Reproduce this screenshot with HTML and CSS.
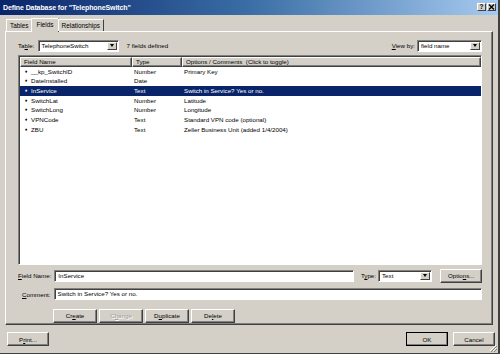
FILE: index.html
```html
<!DOCTYPE html>
<html>
<head>
<meta charset="utf-8">
<link rel="stylesheet" href="styles.css">
</head>
<body>
<div class="window">
  <div class="titlebar">
    <span class="title">Define Database for "TelephoneSwitch"</span>
    <div class="tbtns">
      <span class="tbtn">?</span>
      <span class="tbtn x">
        <svg width="7" height="6" viewBox="0 0 7 6"><path d="M1 0.5 L6 5.5 M6 0.5 L1 5.5" stroke="#000" stroke-width="1.4"/></svg>
      </span>
    </div>
  </div>
  <div class="tabs">
    <span class="tab">Tables</span>
    <span class="tab active">Fields</span>
    <span class="tab">Relationships</span>
  </div>
  <div class="panel">
    <div class="toolbar">
      <span class="lbl">Ta<u>b</u>le:</span>
      <div class="combo table-combo"><span class="val">TelephoneSwitch</span><span class="drop"><i></i></span></div>
      <span class="count">7 fields defined</span>
      <span class="spacer"></span>
      <span class="lbl"><u>V</u>iew by:</span>
      <div class="combo view-combo"><span class="val">field name</span><span class="drop"><i></i></span></div>
    </div>
    <div class="listbox">
      <div class="row head">
        <span class="hc">Field Name</span>
        <span class="hc">Type</span>
        <span class="hc last">Options / Comments &nbsp;(Click to toggle)</span>
      </div>
      <div class="row"><span class="c name"><b class="dia">♦</b>__kp_SwitchID</span><span class="c">Number</span><span class="c">Primary Key</span></div>
      <div class="row"><span class="c name"><b class="dia">♦</b>DateInstalled</span><span class="c">Date</span><span class="c"></span></div>
      <div class="row sel"><span class="c name"><b class="dia">♦</b>InService</span><span class="c">Text</span><span class="c">Switch in Service? Yes or no.</span></div>
      <div class="row"><span class="c name"><b class="dia">♦</b>SwitchLat</span><span class="c">Number</span><span class="c">Latitude</span></div>
      <div class="row"><span class="c name"><b class="dia">♦</b>SwitchLong</span><span class="c">Number</span><span class="c">Longitude</span></div>
      <div class="row"><span class="c name"><b class="dia">♦</b>VPNCode</span><span class="c">Text</span><span class="c">Standard VPN code (optional)</span></div>
      <div class="row"><span class="c name"><b class="dia">♦</b>ZBU</span><span class="c">Text</span><span class="c">Zeller Business Unit (added 1/4/2004)</span></div>
    </div>
    <div class="formrow fieldrow">
      <span class="lbl"><u>F</u>ield Name:</span>
      <div class="input name-input">InService</div>
      <span class="lbl type-lbl">T<u>y</u>pe:</span>
      <div class="combo type-combo"><span class="val">Text</span><span class="drop"><i></i></span></div>
      <button class="btn opt">Optio<u>n</u>s...</button>
    </div>
    <div class="formrow commentrow">
      <span class="lbl"><u>C</u>omment:</span>
      <div class="input comment-input">Switch in Service? Yes or no.</div>
    </div>
    <div class="actions">
      <button class="btn">Cr<u>e</u>ate</button>
      <button class="btn disabled">C<u>h</u>ange</button>
      <button class="btn">D<u>u</u>plicate</button>
      <button class="btn">De<u>l</u>ete</button>
    </div>
  </div>
  <div class="footer">
    <button class="btn">P<u>r</u>int...</button>
    <span class="spacer"></span>
    <button class="btn ok">OK</button>
    <button class="btn">Cancel</button>
  </div>
  <svg class="grip" width="8" height="8" viewBox="0 0 8 8"><path d="M7 1 L1 7 M7 4 L4 7" stroke="#fff" stroke-width="1"/><path d="M8 2 L2 8 M8 5 L5 8" stroke="#808080" stroke-width="1"/></svg>
</div>
</body>
</html>
```
FILE: styles.css
```css
* { box-sizing: border-box; }
html, body { margin: 0; padding: 0; }
body {
  width: 500px;
  height: 354px;
  overflow: hidden;
  background: #d4d0c8;
  font-family: "Liberation Sans", Arial, sans-serif;
  font-size: 6.2px;
  color: #000;
}
u { text-decoration: underline; }
.window {
  position: relative;
  width: 500px;
  height: 354px;
  display: flex;
  flex-direction: column;
  background: #d4d0c8;
  border-right: 2px solid #404040;
  border-bottom: 1px solid #404040;
}
.titlebar {
  height: 15px;
  display: flex;
  align-items: center;
  padding: 0 2px 0 3px;
  background: linear-gradient(to right, #0a246a 0%, #3a6ea5 50%, #a6caf0 100%);
  color: #fff;
}
.title {
  font-weight: bold;
  font-size: 7px;
  letter-spacing: -0.1px;
  flex: 1;
}
.tbtns { display: flex; gap: 1px; }
.tbtn {
  width: 9px;
  height: 8px;
  background: #d4d0c8;
  border: 1px solid;
  border-color: #fff #404040 #404040 #fff;
  color: #000;
  font-weight: bold;
  font-size: 6.5px;
  line-height: 6px;
  display: flex;
  align-items: center;
  justify-content: center;
}
.tabs {
  height: 15px;
  display: flex;
  align-items: flex-end;
  padding-left: 6px;
  margin-top: 1px;
  position: relative;
  z-index: 1;
}
.tab {
  height: 12px;
  padding: 0 3px;
  line-height: 11px;
  border: 1px solid;
  border-color: #fff #404040 transparent #fff;
  border-bottom: none;
  background: #d4d0c8;
  font-size: 6.4px;
}
.tab.active {
  height: 14px;
  line-height: 12px;
  margin-bottom: -1px;
  padding: 0 4px;
  margin-left: -1px;
  margin-right: -1px;
}
.panel {
  margin: 0 5px 0 5px;
  height: 297px;
  border: 1px solid;
  border-color: #fff #404040 #404040 #fff;
  box-shadow: inset -1px -1px 0 #808080;
  padding: 8px 10px 0 12px;
  display: flex;
  flex-direction: column;
}
.toolbar {
  display: flex;
  align-items: center;
  height: 12px;
}
.spacer { flex: 1; }
.lbl { white-space: nowrap; }
.combo {
  height: 12px;
  background: #fff;
  border: 1px solid;
  border-color: #808080 #fff #fff #808080;
  box-shadow: inset 1px 1px 0 #404040;
  display: flex;
  align-items: center;
  padding: 0 1px 0 3px;
}
.combo .val { flex: 1; }
.drop {
  width: 10px;
  height: 8px;
  background: #d4d0c8;
  border: 1px solid;
  border-color: #fff #404040 #404040 #fff;
  display: flex;
  align-items: center;
  justify-content: center;
}
.drop i {
  width: 0; height: 0;
  border-left: 2.5px solid transparent;
  border-right: 2.5px solid transparent;
  border-top: 3px solid #000;
}
.table-combo { width: 81px; margin-left: 3px; }
.count { margin-left: 8px; }
.view-combo { width: 65px; margin-left: 2px; }
.listbox {
  margin-top: 3px;
  height: 210px;
  background: #fff;
  border: 1px solid;
  border-color: #808080 #fff #fff #808080;
  box-shadow: inset 1px 1px 0 #404040;
  padding: 1px 0 0 1px;
}
.row {
  display: grid;
  grid-template-columns: 112px 50px 1fr;
  height: 9.65px;
  line-height: 9.65px;
  white-space: nowrap;
}
.row.head {
  height: 10px;
  line-height: 9px;
}
.hc {
  background: #d4d0c8;
  border: 1px solid;
  border-color: #fff #404040 #404040 #fff;
  padding-left: 3px;
  line-height: 7px;
  box-shadow: inset -1px -1px 0 #808080;
}
.hc.last { border-right-color: #404040; }
.c { padding-left: 2px; overflow: hidden; }
.c.name { padding-left: 5px; }
.dia {
  font-size: 4.5px;
  font-weight: normal;
  display: inline-block;
  width: 6px;
  vertical-align: top;
}
.row.sel { background: #0a246a; color: #fff; }
.formrow {
  display: flex;
  align-items: center;
}
.fieldrow { margin-top: 4px; height: 14px; }
.commentrow { margin-top: 5px; height: 13px; }
.commentrow .lbl { margin-left: 4px; }
.input {
  height: 12px;
  background: #fff;
  border: 1px solid;
  border-color: #808080 #fff #fff #808080;
  box-shadow: inset 1px 1px 0 #404040;
  padding-left: 3px;
  line-height: 10px;
  white-space: nowrap;
}
.name-input { width: 303px; margin-left: 3px; }
.type-lbl { margin-left: 7px; }
.type-combo { width: 55px; margin-left: 2px; }
.comment-input { flex: 1; margin-left: 3px; }
.btn {
  font-family: inherit;
  font-size: 6.2px;
  height: 14px;
  width: 43px;
  padding: 0;
  background: #d4d0c8;
  border: 1px solid;
  border-color: #fff #404040 #404040 #fff;
  box-shadow: inset -1px -1px 0 #808080;
  color: #000;
}
.btn.opt { margin-left: 8px; width: 42px; }
.btn.disabled { color: #a0a0a0; text-shadow: 1px 1px 0 #fff; }
.actions {
  display: flex;
  gap: 2px;
  margin-left: 35px;
  margin-top: 8px;
}
.actions .btn { width: 44px; }
.footer {
  display: flex;
  align-items: center;
  height: 28px;
  padding: 0 3px 0 7px;
  gap: 5px;
}
.footer .btn { width: 42px; }
.btn.ok {
  outline: 1px solid #000;
  outline-offset: -1px;
}
.grip { position: absolute; right: 1px; bottom: 1px; }
```
